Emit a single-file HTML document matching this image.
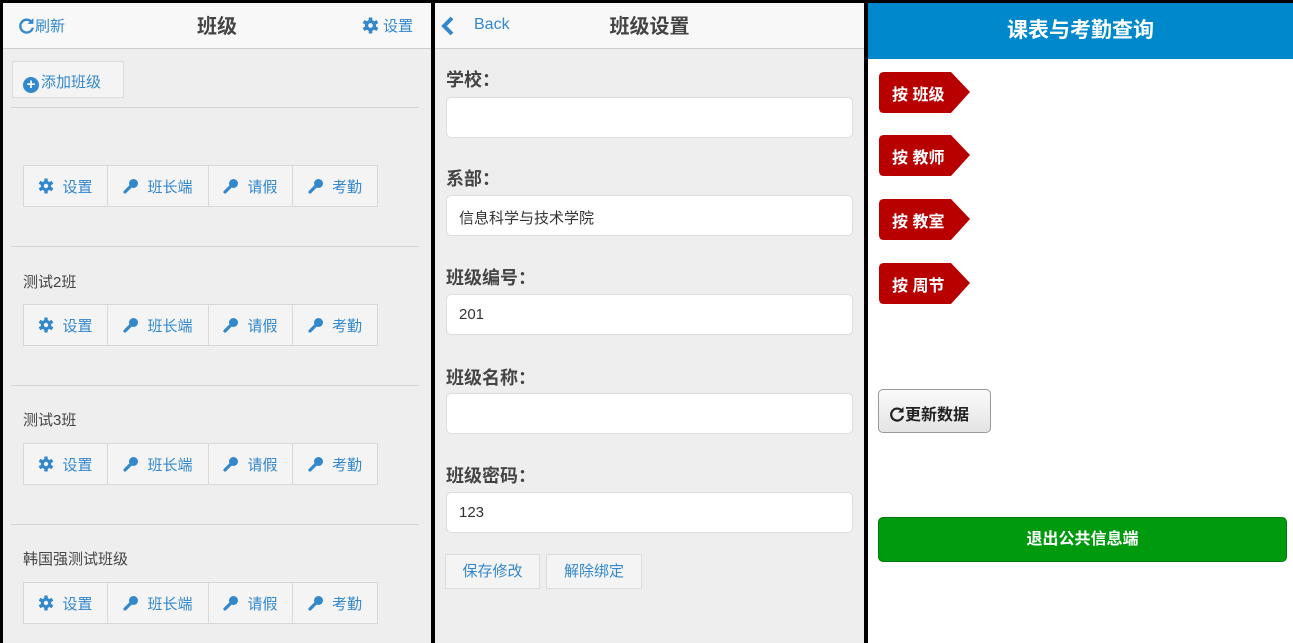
<!DOCTYPE html>
<html><head><meta charset="utf-8"><style>
*{box-sizing:border-box;margin:0;padding:0}
body{width:1293px;height:643px;background:#000;position:relative;overflow:hidden;font-family:"Liberation Sans","Noto Sans CJK SC",sans-serif}
.p{position:absolute;top:3px;height:640px;background:#eee;overflow:hidden}
.abs{position:absolute}
.hd{position:absolute;left:0;top:0;right:0;height:46px;background:#f8f8f8;border-bottom:1px solid #ccc}
.blue{color:#3388cc}
.btn{position:absolute;border:1px solid #ddd;background:#f4f4f4;color:#3388cc;font-size:15px}
.grp{position:absolute;left:20px;height:42px;display:flex;border:1px solid #d8d8d8}
.grp div{background:#f4f4f4;border-right:1px solid #d8d8d8;display:flex;align-items:center;justify-content:center;color:#3388cc;font-size:15px;gap:8px}
.grp div:last-child{border-right:none}
.hr{position:absolute;left:8px;right:12px;height:1px;background:#d4d4d4}
.nm{position:absolute;left:20px;font-size:15px;color:#444}
.lb{position:absolute;left:11px;font-size:18px;font-weight:bold;color:#444}
.in{position:absolute;left:11px;width:407px;height:41px;background:#fff;border:1px solid #ddd;border-radius:5px;font-size:15px;color:#333;padding:11px 0 0 12px}
.tag{position:absolute;left:10px;width:93px;height:45px}
.tag span{position:absolute;left:14px;top:11px;color:#fff;font-weight:bold;font-size:16px}
</style></head><body>
<svg width="0" height="0" style="position:absolute"><defs>
<symbol id="k" viewBox="0 0 16 16"><circle cx="10.5" cy="5.5" r="4.5" fill="#3388cc"/><path d="M8 8L2 14" stroke="#3388cc" stroke-width="3.2" stroke-linecap="round"/></symbol>
<symbol id="g" viewBox="0 0 16 16"><g fill="#3388cc"><circle cx="8" cy="8" r="5.2"/><rect x="6.3" y="0.5" width="3.4" height="15" rx="0.5"/><rect x="6.3" y="0.5" width="3.4" height="15" rx="0.5" transform="rotate(60 8 8)"/><rect x="6.3" y="0.5" width="3.4" height="15" rx="0.5" transform="rotate(120 8 8)"/></g><circle cx="8" cy="8" r="2.2" fill="#f4f4f4"/></symbol>
</defs></svg>
<!-- left -->
<div class="p" style="left:3px;width:428px">
 <div class="hd">
  <div class="abs blue" style="left:15px;top:12px;font-size:15px"><svg width="17" height="17" viewBox="0 0 16 16" style="vertical-align:-3px"><path d="M13 5A6 6 0 1 0 14 10" fill="none" stroke="#3388cc" stroke-width="2.2"/><path d="M14.5 1v5.5h-5.5z" fill="#3388cc"/></svg>刷新</div>
  <div class="abs" style="left:0;right:0;top:7px;text-align:center;font-size:20px;font-weight:bold;color:#444">班级</div>
  <div class="abs blue" style="left:359px;top:12px;font-size:15px"><svg width="17" height="17" style="vertical-align:-3px"><use href="#g"/></svg> 设置</div>
 </div>
 <div class="btn" style="left:9px;top:58px;width:112px;height:37px;padding:9px 0 0 10px"><span style="display:inline-block;width:16px;height:16px;border-radius:50%;background:#3388cc;color:#fff;font-size:15px;line-height:15px;text-align:center;font-weight:bold;vertical-align:-2px;margin-right:2px">+</span>添加班级</div>
 <div class="hr" style="top:104px"></div>
 <div class="grp" style="top:162px"><div style="width:84px"><svg width="16" height="16"><use href="#g"/></svg>设置</div><div style="width:101px"><svg width="16" height="16"><use href="#k"/></svg>班长端</div><div style="width:84px"><svg width="16" height="16"><use href="#k"/></svg>请假</div><div style="width:84px"><svg width="16" height="16"><use href="#k"/></svg>考勤</div></div>
 <div class="hr" style="top:243px"></div>
 <div class="nm" style="top:268px">测试2班</div>
 <div class="grp" style="top:301px"><div style="width:84px"><svg width="16" height="16"><use href="#g"/></svg>设置</div><div style="width:101px"><svg width="16" height="16"><use href="#k"/></svg>班长端</div><div style="width:84px"><svg width="16" height="16"><use href="#k"/></svg>请假</div><div style="width:84px"><svg width="16" height="16"><use href="#k"/></svg>考勤</div></div>
 <div class="hr" style="top:382px"></div>
 <div class="nm" style="top:406px">测试3班</div>
 <div class="grp" style="top:440px"><div style="width:84px"><svg width="16" height="16"><use href="#g"/></svg>设置</div><div style="width:101px"><svg width="16" height="16"><use href="#k"/></svg>班长端</div><div style="width:84px"><svg width="16" height="16"><use href="#k"/></svg>请假</div><div style="width:84px"><svg width="16" height="16"><use href="#k"/></svg>考勤</div></div>
 <div class="hr" style="top:521px"></div>
 <div class="nm" style="top:545px">韩国强测试班级</div>
 <div class="grp" style="top:579px"><div style="width:84px"><svg width="16" height="16"><use href="#g"/></svg>设置</div><div style="width:101px"><svg width="16" height="16"><use href="#k"/></svg>班长端</div><div style="width:84px"><svg width="16" height="16"><use href="#k"/></svg>请假</div><div style="width:84px"><svg width="16" height="16"><use href="#k"/></svg>考勤</div></div>
</div>
<!-- middle -->
<div class="p" style="left:435px;width:429px">
 <div class="hd">
  <svg class="abs" style="left:6px;top:13px" width="14" height="20" viewBox="0 0 14 20"><path d="M11 2L3 10l8 8" fill="none" stroke="#3388cc" stroke-width="4"/></svg>
  <div class="abs blue" style="left:39px;top:13px;font-size:16px">Back</div>
  <div class="abs" style="left:0;right:0;top:7px;text-align:center;font-size:20px;font-weight:bold;color:#444">班级设置</div>
 </div>
 <div class="lb" style="top:63px">学校：</div>
 <div class="in" style="top:94px"></div>
 <div class="lb" style="top:162px">系部：</div>
 <div class="in" style="top:192px">信息科学与技术学院</div>
 <div class="lb" style="top:261px">班级编号：</div>
 <div class="in" style="top:291px">201</div>
 <div class="lb" style="top:361px">班级名称：</div>
 <div class="in" style="top:390px"></div>
 <div class="lb" style="top:459px">班级密码：</div>
 <div class="in" style="top:489px">123</div>
 <div class="btn" style="left:10px;top:551px;width:95px;height:35px;text-align:center;line-height:33px">保存修改</div>
 <div class="btn" style="left:111px;top:551px;width:96px;height:35px;text-align:center;line-height:33px">解除绑定</div>
</div>
<!-- right -->
<div class="p" style="left:868px;width:425px;background:#fff">
 <div class="abs" style="left:0;top:0;width:425px;height:56px;background:#0088cc;color:#fff;font-size:21px;font-weight:bold;text-align:center;line-height:56px">课表与考勤查询</div>
 <div class="tag" style="top:67px"><svg width="93" height="45"><path d="M6 2H73L92 22L73 43H6Q1 43 1 38V7Q1 2 6 2z" fill="#b80000"/></svg><span>按 班级</span></div>
 <div class="tag" style="top:130px"><svg width="93" height="45"><path d="M6 2H73L92 22L73 43H6Q1 43 1 38V7Q1 2 6 2z" fill="#b80000"/></svg><span>按 教师</span></div>
 <div class="tag" style="top:194px"><svg width="93" height="45"><path d="M6 2H73L92 22L73 43H6Q1 43 1 38V7Q1 2 6 2z" fill="#b80000"/></svg><span>按 教室</span></div>
 <div class="tag" style="top:258px"><svg width="93" height="45"><path d="M6 2H73L92 22L73 43H6Q1 43 1 38V7Q1 2 6 2z" fill="#b80000"/></svg><span>按 周节</span></div>
 <div class="abs" style="left:10px;top:386px;width:113px;height:44px;border:1px solid #999;border-radius:5px;background:linear-gradient(#fafafa,#e4e4e4);font-size:16px;font-weight:bold;color:#222;padding:11px 0 0 10px"><svg width="16" height="16" viewBox="0 0 16 16" style="vertical-align:-2px"><path d="M13 5A6 6 0 1 0 14 10" fill="none" stroke="#222" stroke-width="2.2"/><path d="M14.5 1v5.5h-5.5z" fill="#222"/></svg>更新数据</div>
 <div class="abs" style="left:10px;top:514px;width:409px;height:45px;background:#009a0e;border:1px solid #007a0a;border-radius:5px;color:#fff;font-size:16px;font-weight:bold;text-align:center;line-height:43px">退出公共信息端</div>
</div>
</body></html>
